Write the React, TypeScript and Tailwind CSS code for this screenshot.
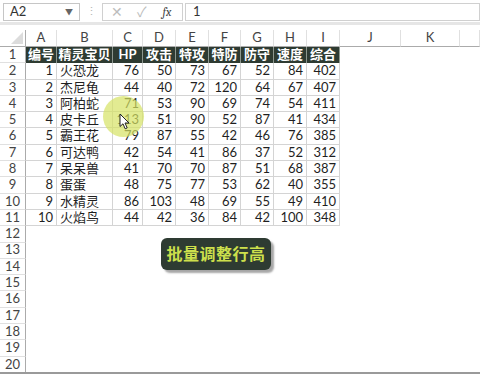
import React from "react";

const HEAD = ["编号", "精灵宝贝", "HP", "攻击", "特攻", "特防", "防守", "速度", "综合"];

const ROWS: (string | number)[][] = [
  [1, "火恐龙", 76, 50, 73, 67, 52, 84, 402],
  [2, "杰尼龟", 44, 40, 72, 120, 64, 67, 407],
  [3, "阿柏蛇", 71, 53, 90, 69, 74, 54, 411],
  [4, "皮卡丘", 113, 51, 90, 52, 87, 41, 434],
  [5, "霸王花", 79, 87, 55, 42, 46, 76, 385],
  [6, "可达鸭", 42, 54, 41, 86, 37, 52, 312],
  [7, "呆呆兽", 41, 70, 70, 87, 51, 68, 387],
  [8, "蛋蛋", 48, 75, 77, 53, 62, 40, 355],
  [9, "水精灵", 86, 103, 48, 69, 55, 49, 410],
  [10, "火焰鸟", 44, 42, 36, 84, 42, 100, 348],
];

const COLS = ["A", "B", "C", "D", "E", "F", "G", "H", "I", "J", "K", ""];

const font = { fontFamily: '"Lato","Noto Sans CJK SC",sans-serif' };

function Cell({ r, c }: { r: number; c: number }) {
  // r: 1..20 sheet row, c: 1..12 sheet column
  if (r === 1 && c <= 9) {
    return (
      <div className="flex items-center justify-center bg-[#2e3b32] border-r border-[#8d978f] text-white font-bold text-[13px]">
        {HEAD[c - 1]}
      </div>
    );
  }
  if (r >= 2 && r <= 11 && c <= 9) {
    const v = ROWS[r - 2][c - 1];
    const isText = typeof v === "string";
    return (
      <div
        className={`flex items-center border-r border-b border-[#d4d4d4] text-[#1f1f1f] text-[13px] ${
          isText ? "justify-start pl-[3px]" : "justify-end pr-[3px]"
        }`}
      >
        {v}
      </div>
    );
  }
  return <div />;
}

export default function App() {
  const rowNums = Array.from({ length: 20 }, (_, i) => i + 1);

  return (
    <div className="relative w-[480px] h-[374px] overflow-hidden bg-white" style={font}>
      {/* FORMULA BAR */}
      <div className="h-[22px] flex items-center pt-[1px] text-[13px] text-[#333]">
        <div className="ml-[3px] w-[77px] h-[18px] border border-[#c6c6c6] flex items-center justify-between px-[6px]">
          <span>A2</span>
          <span className="text-[8px] text-[#666]">▼</span>
        </div>
        <div className="w-[22px] flex justify-center text-[#b5b5b5] text-[11px]">⋮</div>
        <div className="w-[81px] h-[18px] border border-[#d0d0d0] flex items-center text-[#bdbdbd]">
          <span className="ml-[8px] text-[14px]">✕</span>
          <span className="ml-[14px] text-[14px]">✓</span>
          <span className="ml-[16px] italic text-[#444] text-[12px] font-serif">fx</span>
        </div>
        <div className="ml-[2px] flex-1 h-[18px] border border-[#d0d0d0] flex items-center pl-[7px]">1</div>
      </div>
      <div className="h-[3px] bg-[#e6e6e6]" />
      <div className="h-[5px]" />

      {/* SHEET */}
      <div className="grid grid-cols-[26px_31px_56px_30px_33px_33px_32px_33px_33px_33px_61px_59px_1fr] grid-rows-[17px_repeat(20,16.3px)]">
        <div className="relative border-r border-b border-[#ababab]">
          <div className="absolute right-[2px] bottom-[2px] w-0 h-0 border-l-[12px] border-l-transparent border-b-[12px] border-b-[#dcdcdc]" />
        </div>
        {COLS.map((l, i) => (
          <div
            key={"h" + i}
            className="flex items-center justify-center border-r border-b border-r-[#e0e0e0] border-b-[#ababab] text-[#444] text-[13px]"
          >
            {l}
          </div>
        ))}
        {rowNums.map((r) => (
          <React.Fragment key={r}>
            <div className="flex items-center justify-center border-r border-b border-r-[#ababab] border-b-[#e0e0e0] text-[#444] text-[13px]">
              {r}
            </div>
            {COLS.map((_, i) => (
              <Cell key={i} r={r} c={i + 1} />
            ))}
          </React.Fragment>
        ))}
      </div>

      {/* CLICK HIGHLIGHT + CURSOR */}
      <div className="absolute left-[103px] top-[96px] w-[41px] h-[41px] rounded-full bg-[rgba(214,226,100,0.7)]" />
      <svg className="absolute left-[119px] top-[113px]" width="11" height="17" viewBox="0 0 11 17">
        <path d="M1 1 L1 13.5 L4 10.8 L6.2 15.8 L8.2 14.9 L6 10 L10 10 Z" fill="#fff" stroke="#222" strokeWidth="1" strokeLinejoin="round" />
      </svg>

      {/* BUTTON */}
      <div className="absolute left-[161px] top-[238px] w-[110px] h-[32px] rounded-[6px] bg-[#2e3b32] shadow-[3px_3px_2px_rgba(0,0,0,0.35)] flex items-center justify-center text-[#cde04c] font-bold text-[16px] tracking-[0.5px]">
        批量调整行高
      </div>

      {/* BOTTOM EDGE */}
      <div className="absolute left-0 right-0 bottom-0 h-[2px] bg-[#9a9a9a]" />
    </div>
  );
}
